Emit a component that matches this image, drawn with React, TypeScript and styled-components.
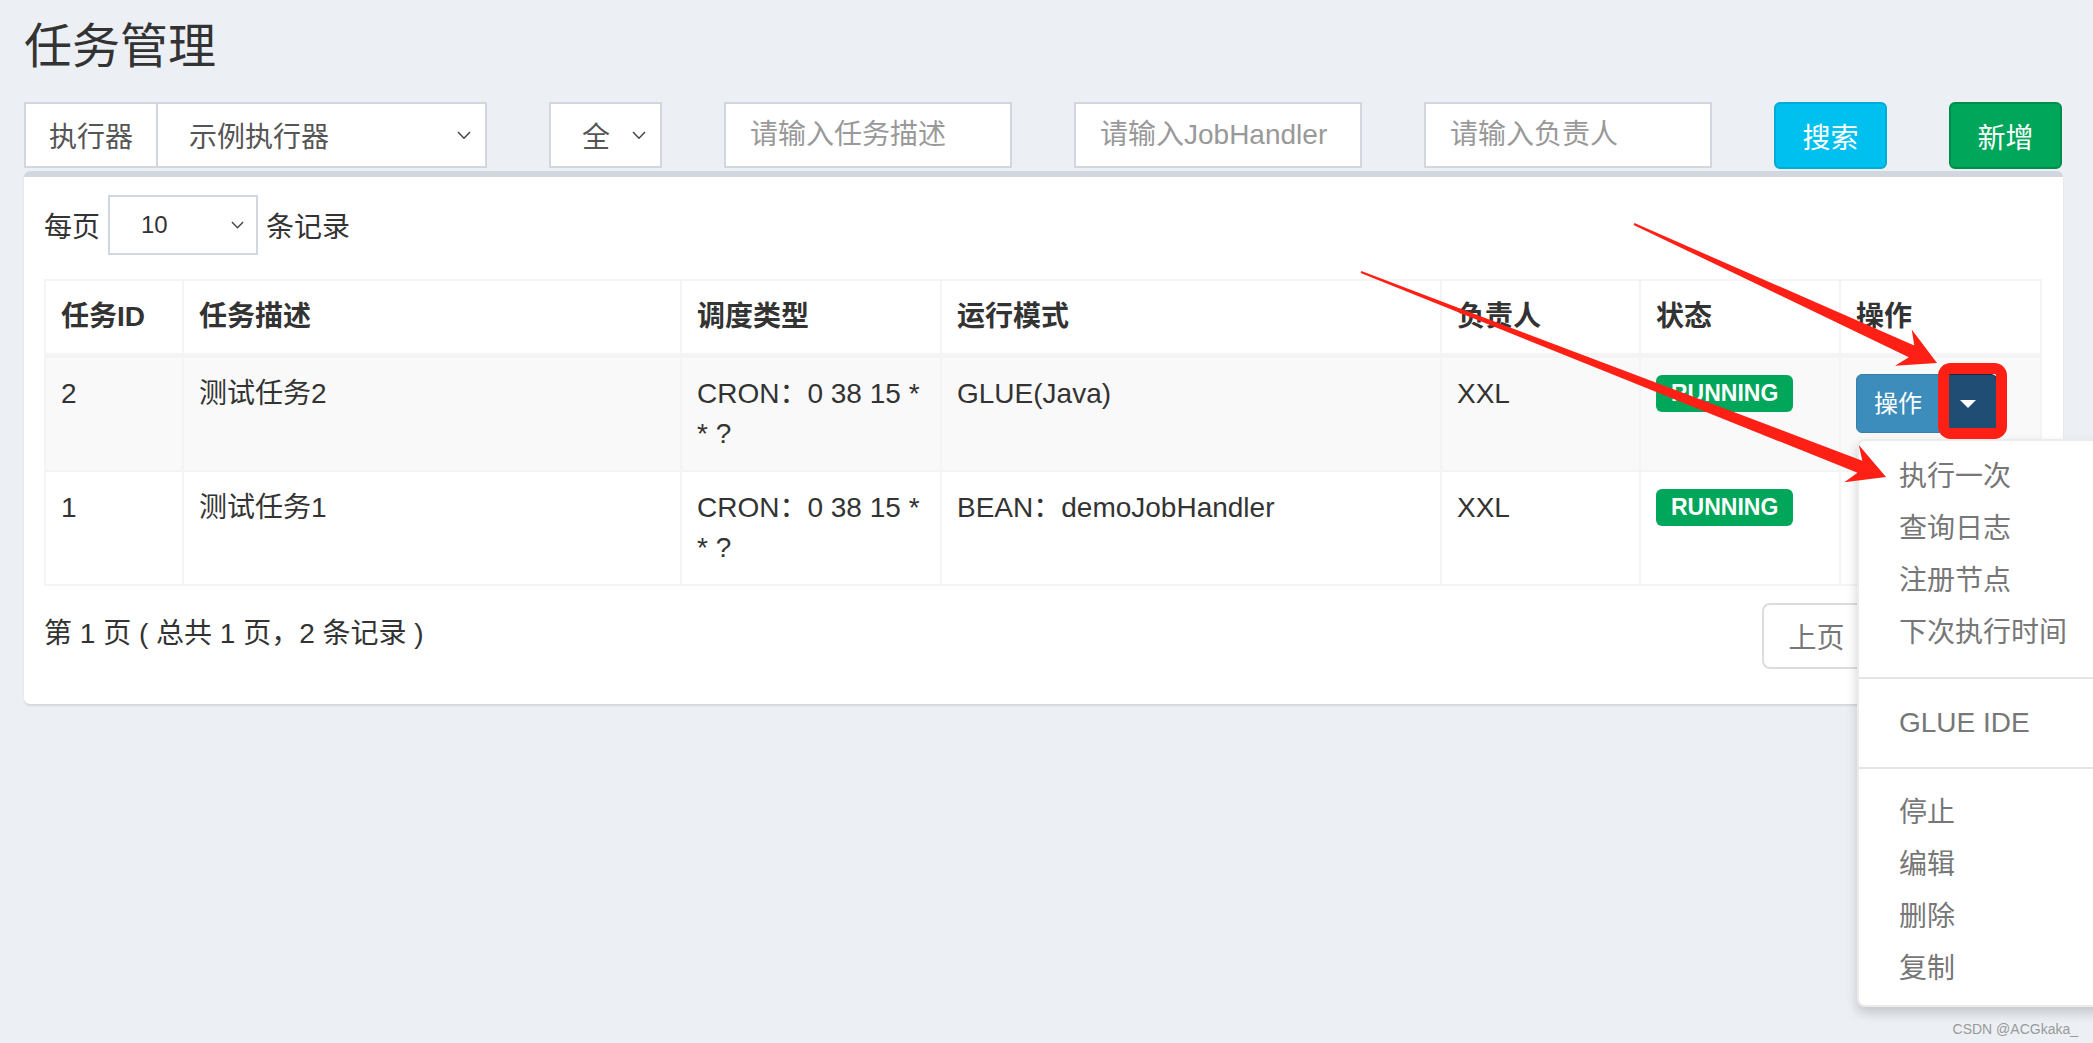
import React from "react";
import styled, { createGlobalStyle } from "styled-components";

const GlobalStyle = createGlobalStyle`
  * { box-sizing: border-box; }
  html, body {
    margin: 0;
    padding: 0;
    overflow: hidden;
    background: #ecf0f5;
  }
  body {
    font-family: "Liberation Sans", "Noto Sans CJK SC", sans-serif;
    font-size: 28px;
    color: #333;
  }
`;

const colors = {
  bg: "#ecf0f5",
  border: "#d2d6de",
  cell: "#f4f4f4",
  text: "#333",
  muted: "#777",
  primary: "#3c8dbc",
  primaryDark: "#204d74",
  info: "#00c0ef",
  success: "#00a65a",
  red: "#fe2014",
};

const Page = styled.div`
  position: relative;
  width: 100%;
  min-height: 100vh;
  padding: 20px 30px 0 24px;
  background: ${colors.bg};
`;

const Title = styled.h1`
  margin: 0;
  font-size: 48px;
  line-height: 54px;
  font-weight: normal;
  color: #333;
`;

const FilterBar = styled.div`
  display: grid;
  grid-template-columns: 463px 113px 288px 288px 288px 113px 113px;
  column-gap: 62px;
  margin-top: 28px;
  height: 67px;
`;

const InputGroup = styled.div`
  display: flex;
  height: 66px;
`;

const Addon = styled.div`
  display: flex;
  align-items: center;
  padding: 0 23px;
  background: #fff;
  border: 2px solid ${colors.border};
  border-right: 0;
  color: #555;
`;

const SelectBox = styled.div<{ $pad?: number }>`
  flex: 1;
  display: flex;
  align-items: center;
  justify-content: space-between;
  height: 66px;
  padding: 0 14px 0 ${(p) => p.$pad ?? 31}px;
  background: #fff;
  border: 2px solid ${colors.border};
  color: #555;
  overflow: hidden;
  white-space: nowrap;
`;

const TextInput = styled.input`
  width: 100%;
  height: 66px;
  padding: 0 24px;
  border: 2px solid ${colors.border};
  background: #fff;
  font: inherit;
  font-size: 28px;
  color: #555;
  outline: none;
  &::placeholder { color: #999; }
`;

const ActionButton = styled.button<{ $variant: "info" | "success" }>`
  height: 67px;
  border-radius: 6px;
  border: 2px solid ${(p) => (p.$variant === "info" ? "#00acd6" : "#008d4c")};
  background: ${(p) => (p.$variant === "info" ? colors.info : colors.success)};
  color: #fff;
  font: inherit;
  font-size: 28px;
  cursor: pointer;
`;

const Box = styled.div`
  margin-top: 2px;
  background: #fff;
  border-top: 6px solid ${colors.border};
  border-radius: 6px;
  box-shadow: 0 2px 2px rgba(0, 0, 0, 0.1);
  padding: 18px 21px 20px 20px;
`;

const LengthRow = styled.div`
  display: flex;
  align-items: center;
  height: 60px;
  gap: 8px;
`;

const SmallSelect = styled(SelectBox)`
  flex: none;
  width: 150px;
  height: 60px;
  font-size: 24px;
  color: #333;
  padding: 0 12px 0 31px;
`;

const Table = styled.table`
  width: 100%;
  margin-top: 24px;
  table-layout: fixed;
  border-collapse: separate;
  border-spacing: 0;
  border-top: 2px solid ${colors.cell};
  border-left: 2px solid ${colors.cell};
`;

const Th = styled.th<{ $w: number }>`
  width: ${(p) => p.$w}px;
  padding: 16px 15px;
  line-height: 40px;
  text-align: left;
  font-weight: bold;
  border-right: 2px solid ${colors.cell};
  border-bottom: 5px solid ${colors.cell};
`;

const Tr = styled.tr<{ $striped?: boolean }>`
  background: ${(p) => (p.$striped ? "#f9f9f9" : "#fff")};
`;

const Td = styled.td`
  padding: 16px 15px;
  line-height: 40px;
  vertical-align: top;
  border-right: 2px solid ${colors.cell};
  border-bottom: 2px solid ${colors.cell};
  word-wrap: break-word;
`;

const Label = styled.span`
  display: inline-block;
  vertical-align: top;
  margin-top: 1px;
  padding: 0 15px;
  height: 37px;
  line-height: 37px;
  border-radius: 6px;
  background: ${colors.success};
  color: #fff;
  font-size: 23px;
  font-weight: bold;
`;

const BtnGroup = styled.div`
  position: relative;
  display: inline-flex;
  vertical-align: top;
`;

const OpButton = styled.button`
  height: 59px;
  padding: 0 17px;
  border: 1px solid #367fa9;
  border-radius: 6px 0 0 6px;
  background: ${colors.primary};
  color: #fff;
  font: inherit;
  font-size: 24px;
`;

const CaretButton = styled.button`
  display: flex;
  align-items: center;
  justify-content: center;
  width: 57px;
  height: 59px;
  border: 1px solid #122b40;
  border-left: 0;
  border-radius: 0 6px 6px 0;
  background: ${colors.primaryDark};
`;

const Caret = styled.span`
  width: 0;
  height: 0;
  border-top: 8px solid #fff;
  border-left: 8px solid transparent;
  border-right: 8px solid transparent;
`;

const DropdownMenu = styled.ul`
  position: absolute;
  top: calc(100% + 6px);
  left: 1px;
  z-index: 5;
  min-width: 280px;
  margin: 0;
  padding: 10px 0;
  list-style: none;
  background: #fff;
  border: 2px solid rgba(0, 0, 0, 0.08);
  border-radius: 8px;
  box-shadow: 0 6px 12px rgba(0, 0, 0, 0.175);
`;

const MenuItem = styled.li`
  padding: 6px 40px;
  line-height: 40px;
  color: ${colors.muted};
  white-space: nowrap;
`;

const Divider = styled.li`
  height: 2px;
  margin: 18px 0;
  background: #e5e5e5;
`;

const Footer = styled.div`
  display: flex;
  align-items: center;
  justify-content: space-between;
  margin: 17px 0 15px;
`;

const Info = styled.div`
  line-height: 40px;
  margin-top: -4px;
`;

const Pagination = styled.div`
  display: flex;
`;

const PageLink = styled.span<{ $active?: boolean; $first?: boolean; $last?: boolean }>`
  display: flex;
  align-items: center;
  height: 66px;
  padding: 0 24px;
  margin-left: ${(p) => (p.$first ? 0 : -2)}px;
  border: 2px solid ${(p) => (p.$active ? colors.primary : "#ddd")};
  background: ${(p) => (p.$active ? colors.primary : "#fff")};
  color: ${(p) => (p.$active ? "#fff" : colors.muted)};
  border-radius: ${(p) => (p.$first ? "8px 0 0 8px" : p.$last ? "0 8px 8px 0" : "0")};
`;

const Overlay = styled.svg`
  position: absolute;
  top: 0;
  left: 0;
  pointer-events: none;
  z-index: 10;
`;

const Watermark = styled.span`
  position: absolute;
  right: 15px;
  bottom: 6px;
  font-family: "Liberation Sans", sans-serif;
  font-size: 14px;
  color: #999;
`;

function Chevron({ size = 14 }: { size?: number }) {
  return (
    <svg width={size} height={size * 0.6} viewBox="0 0 14 8.4" fill="none">
      <polyline points="1,1 7,7.2 13,1" stroke="#444" strokeWidth="1.5" />
    </svg>
  );
}

function arrowPoints(x1: number, y1: number, x2: number, y2: number) {
  const len = Math.hypot(x2 - x1, y2 - y1);
  const ux = (x2 - x1) / len;
  const uy = (y2 - y1) / len;
  const nx = -uy;
  const ny = ux;
  const pt = (d: number, w: number) => `${x2 - ux * d + nx * w},${y2 - uy * d + ny * w}`;
  const s = (w: number) => `${x1 + nx * w},${y1 + ny * w}`;
  return [s(1), pt(28, 6.5), pt(37, 20), `${x2},${y2}`, pt(37, -20), pt(28, -6.5), s(-1)].join(" ");
}

function Annotations() {
  return (
    <Overlay width={2093} height={1043} viewBox="0 0 2093 1043">
      <polygon points={arrowPoints(1634, 224, 1937, 363)} fill={colors.red} />
      <polygon points={arrowPoints(1361, 272, 1886, 477)} fill={colors.red} />
      <rect x={1943.5} y={368.5} width={58} height={65} rx={7} fill="none" stroke={colors.red} strokeWidth={11} />
    </Overlay>
  );
}

const jobs = [
  { id: 2, desc: "测试任务2", cron: "CRON：0 38 15 * * ?", mode: "GLUE(Java)", owner: "XXL", open: true },
  { id: 1, desc: "测试任务1", cron: "CRON：0 38 15 * * ?", mode: "BEAN：demoJobHandler", owner: "XXL", open: false },
];

const menuGroups = [
  ["执行一次", "查询日志", "注册节点", "下次执行时间"],
  ["GLUE IDE"],
  ["停止", "编辑", "删除", "复制"],
];

export default function App() {
  return (
    <Page>
      <GlobalStyle />
      <Title>任务管理</Title>
      <FilterBar>
        <InputGroup>
          <Addon>执行器</Addon>
          <SelectBox>
            <span>示例执行器</span>
            <Chevron />
          </SelectBox>
        </InputGroup>
        <SelectBox>
          <span>全</span>
          <Chevron />
        </SelectBox>
        <TextInput placeholder="请输入任务描述" />
        <TextInput placeholder="请输入JobHandler" />
        <TextInput placeholder="请输入负责人" />
        <ActionButton $variant="info">搜索</ActionButton>
        <ActionButton $variant="success">新增</ActionButton>
      </FilterBar>

      <Box>
        <LengthRow>
          <span>每页</span>
          <SmallSelect>
            <span>10</span>
            <Chevron size={13} />
          </SmallSelect>
          <span>条记录</span>
        </LengthRow>

        <Table>
          <thead>
            <tr>
              <Th $w={138}>任务ID</Th>
              <Th $w={498}>任务描述</Th>
              <Th $w={260}>调度类型</Th>
              <Th $w={500}>运行模式</Th>
              <Th $w={199}>负责人</Th>
              <Th $w={200}>状态</Th>
              <Th $w={201}>操作</Th>
            </tr>
          </thead>
          <tbody>
            {jobs.map((job, i) => (
              <Tr key={job.id} $striped={i % 2 === 0}>
                <Td>{job.id}</Td>
                <Td>{job.desc}</Td>
                <Td>{job.cron}</Td>
                <Td>{job.mode}</Td>
                <Td>{job.owner}</Td>
                <Td>
                  <Label>RUNNING</Label>
                </Td>
                <Td>
                  {job.open && (
                    <BtnGroup>
                      <OpButton>操作</OpButton>
                      <CaretButton>
                        <Caret />
                      </CaretButton>
                      <DropdownMenu>
                        {menuGroups.map((group, gi) => (
                          <React.Fragment key={gi}>
                            {gi > 0 && <Divider />}
                            {group.map((item) => (
                              <MenuItem key={item}>{item}</MenuItem>
                            ))}
                          </React.Fragment>
                        ))}
                      </DropdownMenu>
                    </BtnGroup>
                  )}
                </Td>
              </Tr>
            ))}
          </tbody>
        </Table>

        <Footer>
          <Info>第 1 页 ( 总共 1 页，2 条记录 )</Info>
          <Pagination>
            <PageLink $first>上页</PageLink>
            <PageLink $active>1</PageLink>
            <PageLink $last>下页</PageLink>
          </Pagination>
        </Footer>
      </Box>

      <Annotations />
      <Watermark>CSDN @ACGkaka_</Watermark>
    </Page>
  );
}
